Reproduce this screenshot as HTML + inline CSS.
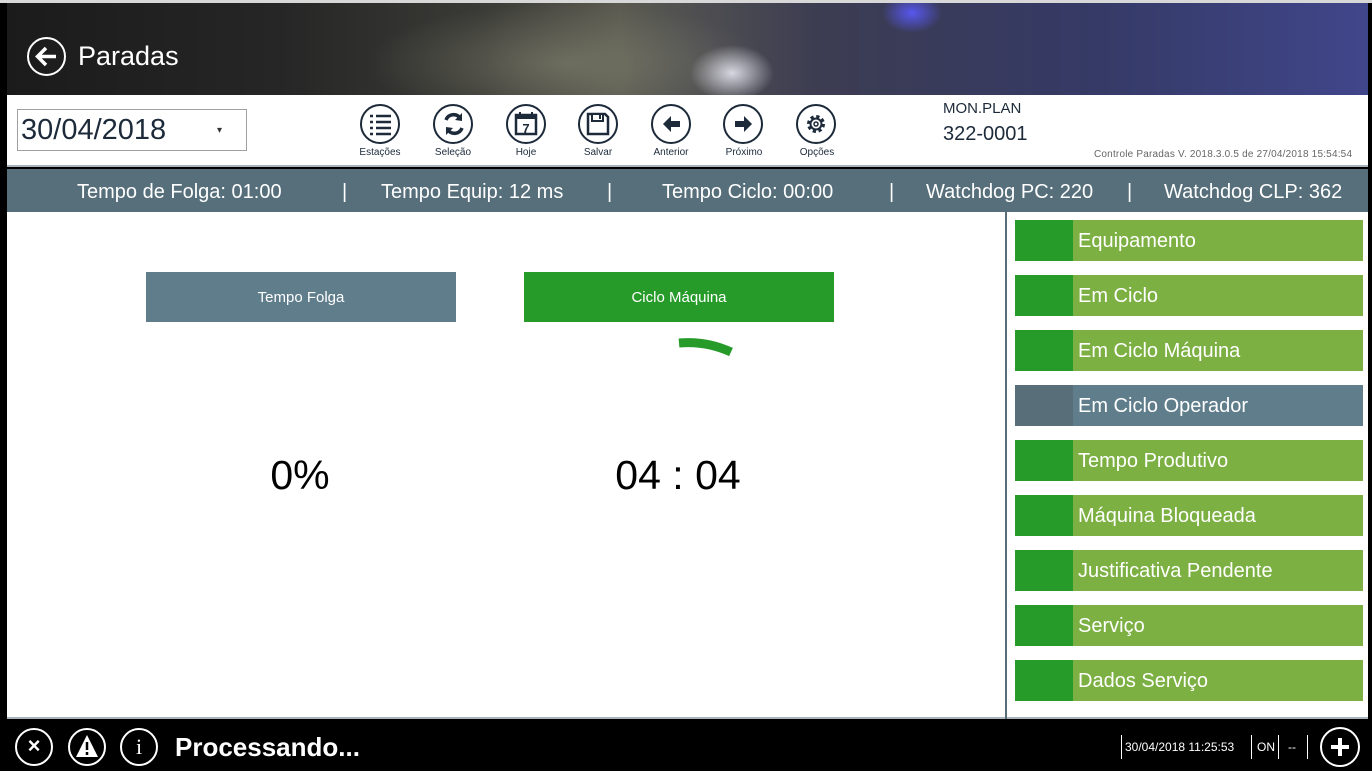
<!DOCTYPE html>
<html><head><meta charset="utf-8"><style>
*{margin:0;padding:0;box-sizing:border-box}
body{width:1372px;height:771px;background:#000;position:relative;overflow:hidden;font-family:"Liberation Sans","DejaVu Sans",sans-serif}
.a{position:absolute}
.hdr{left:7px;top:3px;width:1361px;height:92px;background:
radial-gradient(ellipse 60px 40px at 725px 70px,rgba(230,230,240,.9),rgba(230,230,240,0) 70%),
radial-gradient(ellipse 30px 20px at 905px 10px,rgba(90,90,255,.9),rgba(0,0,0,0)),
radial-gradient(ellipse 200px 60px at 560px 60px,rgba(140,140,120,.5),rgba(0,0,0,0)),
linear-gradient(90deg,#1b1b1b 0%,#262626 20%,#3a3a36 35%,#5a5a50 45%,#3c3c52 60%,#353a66 80%,#40468a 100%)}
.tb{left:7px;top:95px;width:1361px;height:72px;background:#fff;border-bottom:2px solid #a9b3bb}
.ic{position:absolute;top:104px;width:40px;height:40px;border:2px solid #1c2a3a;border-radius:50%}
.lb{position:absolute;top:147px;width:70px;text-align:center;font-size:10px;color:#1c2a3a}
.sb{left:7px;top:169px;width:1361px;height:43px;background:#566f7b;color:#fff;font-size:20px}
.sb span{position:absolute;top:12px;white-space:nowrap}
.main{left:7px;top:212px;width:1361px;height:507px;background:#fff;border-bottom:2px solid #a9b3bb}
.rb{position:absolute;left:1015px;width:348px;height:41px;background:#7cb042;color:#fff;font-size:20px}
.rb i{position:absolute;left:0;top:0;width:58px;height:41px;background:#279b2a}
.rb span{position:absolute;left:63px;top:10px}
.bi{position:absolute;top:728px;width:38px;height:38px;border:2px solid #fff;border-radius:50%;color:#fff;text-align:center}
</style></head><body>
<div class="a" style="left:0;top:0;width:1372px;height:3px;background:#d8d8d8"></div>
<div class="a hdr"></div>
<div class="a" style="left:27px;top:37px;width:39px;height:39px;border:2.5px solid #fff;border-radius:50%"></div>
<svg class="a" style="left:27px;top:37px" width="39" height="39"><path d="M29 19.5H11M19 11l-8.5 8.5 8.5 8.5" stroke="#fff" stroke-width="3.5" fill="none"/></svg>
<div class="a" style="left:78px;top:41px;color:#fff;font-size:27px">Paradas</div>
<div class="a tb"></div>
<div class="a" style="left:17px;top:109px;width:230px;height:42px;border:1px solid #a0a0a0;background:#fff"></div>
<div class="a" style="left:21px;top:114px;font-size:29px;color:#1c2a3a">30/04/2018</div>
<div class="a" style="left:217px;top:125px;font-size:10px;color:#333">▾</div>
<div class="ic" style="left:360px"></div><div class="ic" style="left:433px"></div><div class="ic" style="left:506px"></div><div class="ic" style="left:578px"></div><div class="ic" style="left:651px"></div><div class="ic" style="left:723px"></div><div class="ic" style="left:796px"></div>
<svg class="a" style="left:0;top:0" width="900" height="170" fill="#1c2a3a" stroke="#1c2a3a">
<g stroke-width="2.5"><path d="M370 116h3M370 122h3M370 128h3M370 134h3M376 116h15M376 122h15M376 128h15M376 134h15"/></g>
<path d="M446 120a8 8 0 0 1 14 -2" fill="none" stroke-width="3.5"/><path d="M462 113l0 8-7-1z" stroke="none"/>
<path d="M462 128a8 8 0 0 1 -14 2" fill="none" stroke-width="3.5"/><path d="M446 135l0-8 7 1z" stroke="none"/>
<rect x="516" y="115" width="20" height="19" fill="#fff" stroke-width="2.5"/><rect x="516" y="115" width="20" height="4" stroke="none"/><path d="M520 112v5M532 112v5" stroke-width="2"/>
<text x="526" y="133" font-size="13" font-weight="bold" text-anchor="middle" stroke="none" font-family="Liberation Sans">7</text>
<path d="M588 114h17l3 3v17h-20z" fill="#fff" stroke-width="2.5"/><rect x="592" y="114" width="11" height="7" fill="#fff" stroke-width="2"/><rect x="599" y="115" width="2" height="4" stroke="none"/>
<path d="M663 124l8-8v5h9v6h-9v5z" stroke="none"/>
<path d="M752 124l-8-8v5h-9v6h9v5z" stroke="none"/>
<circle cx="816" cy="124" r="7" fill="none" stroke-width="4" stroke-dasharray="3 2.5"/><circle cx="816" cy="124" r="5.5" fill="none" stroke-width="2"/><circle cx="816" cy="124" r="2" fill="none" stroke-width="1.5"/>
</svg>
<div class="lb" style="left:345px">Estações</div><div class="lb" style="left:418px">Seleção</div><div class="lb" style="left:491px">Hoje</div><div class="lb" style="left:563px">Salvar</div><div class="lb" style="left:636px">Anterior</div><div class="lb" style="left:709px">Próximo</div><div class="lb" style="left:782px">Opções</div>
<div class="a" style="left:943px;top:100px;font-size:15px;color:#1c2a3a">MON.PLAN</div>
<div class="a" style="left:943px;top:123px;font-size:20px;color:#1c2a3a">322-0001</div>
<div class="a" style="left:1094px;top:149px;font-size:10px;color:#666;letter-spacing:0.2px">Controle Paradas V. 2018.3.0.5 de 27/04/2018 15:54:54</div>
<div class="a sb"><span style="left:70px">Tempo de Folga: 01:00</span><span style="left:335px">|</span><span style="left:374px">Tempo Equip: 12 ms</span><span style="left:600px">|</span><span style="left:655px">Tempo Ciclo: 00:00</span><span style="left:882px">|</span><span style="left:919px">Watchdog PC: 220</span><span style="left:1120px">|</span><span style="left:1157px">Watchdog CLP: 362</span></div>
<div class="a main"></div>
<div class="a" style="left:1005px;top:212px;width:2px;height:507px;background:#566f7b"></div>
<div class="a" style="left:146px;top:272px;width:310px;height:50px;background:#607d8b;color:#fff;font-size:15px;text-align:center;line-height:52px">Tempo Folga</div>
<div class="a" style="left:524px;top:272px;width:310px;height:50px;background:#279b2a;color:#fff;font-size:15px;text-align:center;line-height:52px">Ciclo Máquina</div>
<svg class="a" style="left:600px;top:320px" width="200" height="60"><path d="M79 23A103 103 0 0 1 131 32" stroke="#279b2a" stroke-width="9" fill="none"/></svg>
<div class="a" style="left:200px;top:452px;width:200px;text-align:center;font-size:41px;color:#000">0%</div>
<div class="a" style="left:528px;top:452px;width:300px;text-align:center;font-size:41px;color:#000">04 : 04</div>
<div class="rb" style="top:220px"><i></i><span>Equipamento</span></div>
<div class="rb" style="top:275px"><i></i><span>Em Ciclo</span></div>
<div class="rb" style="top:330px"><i></i><span>Em Ciclo Máquina</span></div>
<div class="rb" style="top:385px;background:#607d8b"><i style="background:#586f7a"></i><span>Em Ciclo Operador</span></div>
<div class="rb" style="top:440px"><i></i><span>Tempo Produtivo</span></div>
<div class="rb" style="top:495px"><i></i><span>Máquina Bloqueada</span></div>
<div class="rb" style="top:550px"><i></i><span>Justificativa Pendente</span></div>
<div class="rb" style="top:605px"><i></i><span>Serviço</span></div>
<div class="rb" style="top:660px"><i></i><span>Dados Serviço</span></div>
<div class="bi" style="left:15px;font-size:22px;line-height:32px;font-weight:bold">×</div>
<div class="bi" style="left:68px"></div>
<svg class="a" style="left:68px;top:728px" width="38" height="38"><path d="M19 7L30 29H8z" fill="#fff"/><path d="M19 14v8M19 24v3" stroke="#000" stroke-width="2.5"/></svg>
<div class="bi" style="left:120px;font-size:22px;line-height:34px;font-family:'Liberation Serif',serif">i</div>
<div class="a" style="left:175px;top:732px;font-size:26px;font-weight:bold;color:#fff">Processando...</div>
<div class="a" style="left:1121px;top:735px;width:1px;height:24px;background:#fff"></div>
<div class="a" style="left:1125px;top:740px;font-size:12px;color:#fff">30/04/2018 11:25:53</div>
<div class="a" style="left:1251px;top:735px;width:1px;height:24px;background:#fff"></div>
<div class="a" style="left:1257px;top:740px;font-size:12px;color:#fff">ON</div>
<div class="a" style="left:1278px;top:735px;width:1px;height:24px;background:#fff"></div>
<div class="a" style="left:1288px;top:740px;font-size:12px;color:#fff">--</div>
<div class="a" style="left:1307px;top:735px;width:1px;height:24px;background:#fff"></div>
<div class="bi" style="left:1320px;top:727px;width:40px;height:40px"></div>
<svg class="a" style="left:1320px;top:727px" width="40" height="40"><path d="M20 11v18M11 20h18" stroke="#fff" stroke-width="4"/></svg>
</body></html>
